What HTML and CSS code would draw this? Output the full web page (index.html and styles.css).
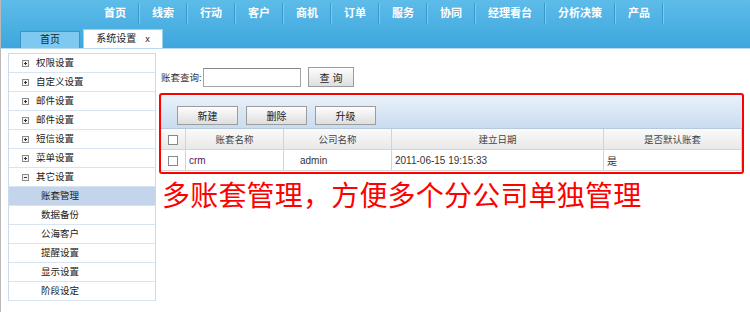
FILE: index.html
```html
<!DOCTYPE html>
<html lang="zh-CN">
<head>
  <meta charset="UTF-8">
  <title>系统设置</title>

  <link rel="stylesheet" href="styles.css">
</head>
<body>
  <div class="top">
    <ul class="nav">
      <li>首页</li>
      <li>线索</li>
      <li>行动</li>
      <li>客户</li>
      <li>商机</li>
      <li>订单</li>
      <li>服务</li>
      <li>协同</li>
      <li class="wide">经理看台</li>
      <li class="wide">分析决策</li>
      <li>产品</li>
    </ul>
    <div class="tabs">
      <div class="tab">首页</div>
      <div class="tab on">系统设置 <span class="close">x</span></div>
    </div>
  </div>

  <div class="main">
    <ul class="side">
      <li><span class="ico plus"></span>权限设置</li>
      <li><span class="ico plus"></span>自定义设置</li>
      <li><span class="ico plus"></span>邮件设置</li>
      <li><span class="ico plus"></span>邮件设置</li>
      <li><span class="ico plus"></span>短信设置</li>
      <li><span class="ico plus"></span>菜单设置</li>
      <li><span class="ico minus"></span>其它设置</li>
      <li class="sub cur">账套管理</li>
      <li class="sub">数据备份</li>
      <li class="sub">公海客户</li>
      <li class="sub">提醒设置</li>
      <li class="sub">显示设置</li>
      <li class="sub">阶段设定</li>
    </ul>

    <div class="content">
      <div class="search">
        <label>账套查询:</label>
        <input type="text" class="txt">
        <button class="btn qbtn">查 询</button>
      </div>

      <div class="redbox">
        <div class="toolbar">
          <button class="btn">新建</button>
          <button class="btn">删除</button>
          <button class="btn">升级</button>
        </div>
        <table class="grid">
          <tr>
            <th class="c0"><span class="chk"></span></th>
            <th class="c1">账套名称</th>
            <th class="c2">公司名称</th>
            <th class="c3">建立日期</th>
            <th class="c4">是否默认账套</th>
          </tr>
          <tr>
            <td class="c0"><span class="chk"></span></td>
            <td class="name">crm</td>
            <td class="comp">admin</td>
            <td>2011-06-15 19:15:33</td>
            <td>是</td>
          </tr>
        </table>
      </div>

      <div class="note">多账套管理，方便多个分公司单独管理</div>
    </div>
  </div>
</body>
</html>
```

FILE: styles.css
```css
body {
  margin: 0;
  border-left: 1px solid #b9b9b9;
  min-height: 312px;
  box-sizing: border-box;
  font-family: "Liberation Sans", "Noto Sans CJK SC", sans-serif;
  font-size: 9.5px;
  color: #333;
  background: #fff;
}

ul {
  list-style: none;
  margin: 0;
  padding: 0;
}

.top {
  height: 48px;
  border-bottom: 1px solid #b3dcf2;
  background: linear-gradient(#5dbce9, #3da6dc);
  display: flex;
  flex-direction: column;
}

.nav {
  display: flex;
  height: 30px;
  padding-left: 91px;
}

.nav li {
  width: 46px;
  height: 21px;
  margin-top: 3px;
  line-height: 21px;
  text-align: center;
  color: #fff;
  font-weight: bold;
  font-size: 11px;
  border-right: 1px solid #3a97c9;
  box-shadow: 1px 0 0 #7ccaf0;
  margin-right: 1px;
}

.nav li.wide {
  width: 68px;
}

.tabs {
  display: flex;
  align-items: flex-end;
  height: 18px;
  padding-left: 19px;
  gap: 3px;
}

.tab {
  width: 58px;
  height: 16px;
  line-height: 16px;
  text-align: center;
  font-size: 10px;
  background: #7dc9ef;
  border: 1px solid #3f93c4;
  border-bottom: none;
  color: #222;
}

.tab.on {
  width: 78px;
  height: 18px;
  line-height: 18px;
  background: #fff;
  border-color: #9fd0ec;
}

.tab .close {
  margin-left: 6px;
  font-size: 9px;
}

.main {
  display: flex;
  padding: 4px 0 0 7px;
}

.side {
  width: 146px;
  border: 1px solid #c9daec;
  border-bottom-width: 0;
}

.side li {
  height: 18px;
  line-height: 18px;
  border-bottom: 1px solid #d7e4f2;
  padding-left: 13px;
  display: flex;
  align-items: center;
  color: #222;
}

.side li.sub {
  padding-left: 32px;
}

.side li.cur {
  background: #c4d5eb;
}

.ico {
  width: 5px;
  height: 5px;
  border: 1px solid #8a8a8a;
  margin-right: 7px;
  position: relative;
  background: #f4f4f4;
}

.ico::before {
  content: "";
  position: absolute;
  left: 1px;
  top: 2px;
  width: 3px;
  height: 1px;
  background: #333;
}

.plus::after {
  content: "";
  position: absolute;
  left: 2px;
  top: 1px;
  width: 1px;
  height: 3px;
  background: #333;
}

.content {
  margin-left: 3px;
  width: 586px;
}

.search {
  display: flex;
  align-items: center;
  margin-top: 14px;
  height: 20px;
  padding-left: 2px;
}

.search label {
  width: 42px;
  white-space: nowrap;
}

.txt {
  width: 94px;
  height: 15px;
  padding: 1px;
  border: 1px solid #a5a5a5;
  border-top-color: #888;
  margin: 0;
}

.btn {
  font-family: "Liberation Sans", "Noto Sans CJK SC", sans-serif;
  font-size: 10px;
  color: #222;
  width: 61px;
  height: 19px;
  padding: 0;
  border: 1px solid #9c9c9c;
  background: linear-gradient(#fdfdfd, #dedede);
}

.qbtn {
  width: 46px;
  height: 20px;
  margin-left: 7px;
}

.redbox {
  margin-top: 6px;
  border: 2px solid #f00;
  border-radius: 3px;
  padding: 1px 0 1px 0;
  width: 581px;
}

.toolbar {
  height: 22px;
  padding: 10px 0 0 16px;
  display: flex;
  gap: 8px;
  background: linear-gradient(#e9f1fa, #c9dcef);
  border-bottom: 1px solid #b6c9dd;
}

.grid {
  width: 581px;
  border-collapse: collapse;
}

.grid th,
.grid td {
  height: 20px;
  padding: 0;
  border: 1px solid #d4d4d4;
  border-top: none;
  font-weight: normal;
}

.grid tr th:first-child,
.grid tr td:first-child {
  border-left: none;
}

.grid th {
  background: linear-gradient(#fafafa, #e8e8e8);
  color: #444;
  text-align: center;
}

.grid td {
  text-align: left;
  padding-left: 3px;
  font-size: 10px;
}

.grid td.c0 {
  padding: 0;
  text-align: center;
}

.c0 { width: 24px; }
.c1 { width: 97px; }
.c2 { width: 107px; }
.c3 { width: 211px; }

.chk {
  display: inline-block;
  width: 8px;
  height: 8px;
  border: 1px solid #888;
  background: #fff;
  vertical-align: middle;
}

.grid td.name {
  color: #4b1a5a;
}

.grid td.comp {
  padding-left: 16px;
}

.note {
  margin-top: 2px;
  padding-left: 3px;
  font-family: "Noto Sans CJK SC", sans-serif;
  font-size: 28px;
  line-height: 36px;
  color: #f00;
  letter-spacing: 0.2px;
}
```
